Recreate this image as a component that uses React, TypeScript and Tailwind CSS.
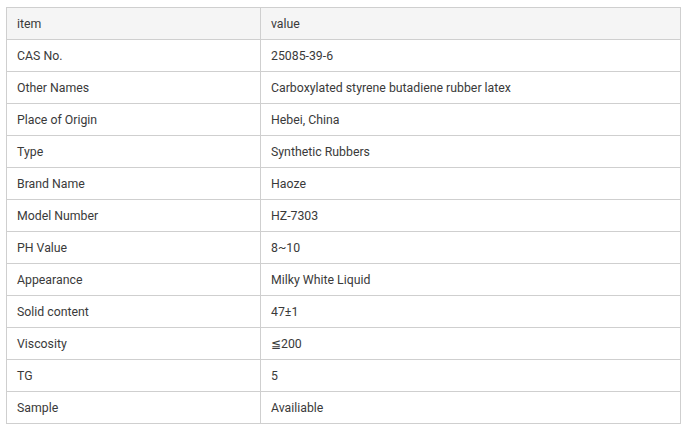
const rows: [string, string][] = [
  ["CAS No.", "25085-39-6"],
  ["Other Names", "Carboxylated styrene butadiene rubber latex"],
  ["Place of Origin", "Hebei, China"],
  ["Type", "Synthetic Rubbers"],
  ["Brand Name", "Haoze"],
  ["Model Number", "HZ-7303"],
  ["PH Value", "8~10"],
  ["Appearance", "Milky White Liquid"],
  ["Solid content", "47±1"],
  ["Viscosity", "≦200"],
  ["TG", "5"],
  ["Sample", "Availiable"],
];

export default function App() {
  return (
    <div className="w-[692px] h-[433px] bg-white pl-[6px] pt-[7px] font-['Roboto',sans-serif] text-[12.3px] text-[#3a3a3a]">
      <table className="w-[675px] border-collapse border border-[#cfcfcf]">
        <colgroup>
          <col className="w-[254px]" />
          <col />
        </colgroup>
        <thead>
          <tr className="h-[32px] bg-[#f5f5f5]">
            <td className="border border-[#cfcfcf] pl-[10px] pt-[2px] align-middle">item</td>
            <td className="border border-[#cfcfcf] pl-[10px] pt-[2px] align-middle">value</td>
          </tr>
        </thead>
        <tbody>
          {rows.map(([k, v]) => (
            <tr key={k} className="h-[32px]">
              <td className="border border-[#cfcfcf] pl-[10px] pt-[2px] align-middle">{k}</td>
              <td className="border border-[#cfcfcf] pl-[10px] pt-[2px] align-middle">{v}</td>
            </tr>
          ))}
        </tbody>
      </table>
    </div>
  );
}
